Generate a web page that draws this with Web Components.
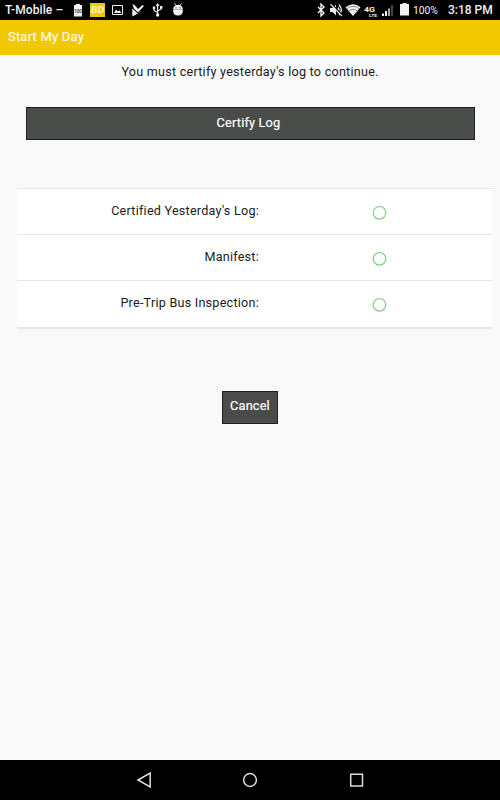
<!DOCTYPE html>
<html lang="en">
<head>
<meta charset="utf-8">
<title>Start My Day</title>
<style>
html, body {
  margin: 0;
  height: 100%;
  background: #f9f9f9;
}
</style>
</head>
<body>
<day-app></day-app>

<template id="status-bar">
<style>
:host {
  display: flex;
  height: 20px;
  align-items: center;
  justify-content: space-between;
  padding: 0 7px 0 5px;
  background: #000;
  color: #f2f2f2;
  font-size: 12px;
  line-height: 20px;
  white-space: nowrap;
}
.side {
  display: flex;
  height: 20px;
}
svg {
  display: block;
  flex: none;
  fill: #f2f2f2;
}
.carrier {
  width: 67px;
  font-weight: 500;
  letter-spacing: 0.1px;
}
.pct {
  width: 35px;
  font-size: 10.3px;
  line-height: 21px;
}
.time {
  width: 45px;
  font-size: 12px;
  font-weight: 500;
}
.tiny {
  font: bold 5px Roboto, sans-serif;
  fill: #555;
}
.logo {
  font: italic bold 9.5px Roboto, sans-serif;
  fill: #fff6c8;
}
.net {
  font: bold 8px Roboto, sans-serif;
}
.lte {
  font: bold 3.5px Roboto, sans-serif;
}
.line {
  fill: none;
  stroke: #f2f2f2;
}
</style>
<div class="side">
  <span class="carrier">T-Mobile –</span>
  <svg width="18" height="20"><path d="M2 5h2V4h4v1h2v11.500H2z"/><text class="tiny" x="1.900" y="12.500" textLength="8">100</text></svg>
  <svg width="20" height="20"><path fill="#f2c900" d="M0 3h15v14H0z"/><text class="logo" x="1" y="13.300" textLength="13" lengthAdjust="spacingAndGlyphs">BD</text></svg>
  <svg width="21" height="20"><path class="line" d="M2.500 5.500h10v9h-10z"/><path d="M4 13l2-3.500 2 2 1.500-1.200 1.800 2.700z"/></svg>
  <svg width="21" height="20"><path d="M1.300 4L4 5.500 7 9l4.500-4 1.300 1.300L7 12.500 3 8.800zM1.300 8.500L7 13.700 9 11.800l1.500-.3L1.300 16.500z"/></svg>
  <svg width="20" height="20"><path class="line" stroke-width="1.200" d="M5.600 5v9M5.600 12.500L2 10.500V8M5.600 11l3.600-2V7"/><path d="M5.600 3l1.900 3H3.700zM.8 6.500h2.400v2.400H.8zM8 6h2.400v2.400H8z"/><circle cx="5.600" cy="15" r="1.700"/></svg>
  <svg width="14" height="20"><path d="M1.200 9a4.800 4.300 0 0 1 9.600 0v.700H1.200zM1.200 10.100h9.600v1q0 4.400-4.800 4.400t-4.800-4.400z"/><path class="line" d="M2.500 3.500L4 5.500M9.500 3.500L8 5.500"/><circle cx="4" cy="7.800" r=".6" fill="#000"/><circle cx="8" cy="7.800" r=".6" fill="#000"/></svg>
</div>
<div class="side">
  <svg width="13" height="20"><path class="line" stroke-width="1.400" d="M1 7l6 6-3 2.800V4.200L7 7l-6 6"/></svg>
  <svg width="16" height="20"><path d="M0 8h2.500L6 4.500v11L2.500 12H0z"/><path class="line" stroke-width="1.300" d="M8 7.500q1.800 2.500 0 5M9 4.700q4.500 5 0 10.300"/><path stroke="#000" stroke-width="1.200" d="M1.500 3.500l11 12"/><path class="line" stroke-width="1.200" d="M0.500 4.200l11.500 11.900"/></svg>
  <svg width="18" height="20"><path d="M-.5 7.300q7.500-6 15 0l-1.200 1.500L7 16 .7 8.800z"/><path fill="none" stroke="#555" stroke-width=".7" d="M.7 8.800q6.300-5 12.600 0M2.700 11q4.300-3.500 8.600 0"/></svg>
  <svg width="18" height="20"><text class="net" x="0" y="12" textLength="11" lengthAdjust="spacingAndGlyphs">4G</text><text class="lte" x="5" y="17" textLength="8" lengthAdjust="spacingAndGlyphs">LTE</text></svg>
  <svg width="18" height="20"><path d="M0 13.500h2V16H0zM3 11h2v5H3z"/><path fill="#aaa" d="M6 8.500h2V16H6z"/><path fill="#444" d="M9 5h2v11H9z"/></svg>
  <svg width="13" height="20"><path d="M0 4h2.500V3h4v1H9v11.500H0z"/></svg>
  <span class="pct">100%</span>
  <span class="time">3:18 PM</span>
</div>
</template>

<template id="title-bar">
<style>
:host {
  display: block;
  height: 35px;
  padding-left: 8px;
  background: #f2c900;
  color: #fffbe6;
  font-size: 13px;
  line-height: 33px;
  letter-spacing: 0.2px;
  -webkit-text-stroke: 0.2px;
}
</style>
<slot></slot>
</template>

<template id="dark-button">
<style>
:host {
  display: block;
  box-sizing: border-box;
  height: 33px;
  border: 1px solid #1c2120;
  background: #4a4c4a;
  color: #fff;
  font-size: 12.7px;
  line-height: 30px;
  letter-spacing: 0.2px;
  text-align: center;
  -webkit-text-stroke: 0.2px;
}
</style>
<slot></slot>
</template>

<template id="check-list">
<style>
:host {
  display: block;
  border-top: 1px solid #e3e3e3;
  border-bottom: 1px solid #e8e8e8;
  background: #fff;
}
</style>
<slot></slot>
</template>

<template id="check-item">
<style>
:host {
  display: grid;
  grid-template-columns: 242px 1fr;
  box-sizing: border-box;
  height: 46px;
  border-bottom: 1px solid #e5e5e5;
}
:host(:last-child) {
  height: 47px;
}
.label {
  text-align: right;
  line-height: 44px;
}
svg {
  display: block;
  margin: 16px 0 0 113px;
  fill: none;
  stroke: #7dce7d;
  stroke-width: 1.2;
}
</style>
<span class="label"><slot></slot></span>
<svg width="16" height="16"><circle cx="7.500" cy="7.800" r="6.300"/></svg>
</template>

<template id="nav-bar">
<style>
:host {
  display: flex;
  height: 40px;
  align-items: center;
  justify-content: center;
  gap: 86px;
  background: #000;
}
svg {
  display: block;
  fill: none;
  stroke: #dcdcdc;
  stroke-width: 1.5;
}
</style>
<svg width="20" height="20"><path d="M4 10L16.200 3v14z"/></svg>
<svg width="20" height="20"><circle cx="10" cy="10" r="6.400"/></svg>
<svg width="20" height="20"><path d="M4.700 4.200h11.800v11.800H4.700z"/></svg>
</template>

<template id="day-app">
<style>
:host {
  display: flex;
  flex-direction: column;
  height: 800px;
  width: 500px;
  background: #f9f9f9;
  color: #1c1c1c;
  font-family: Roboto, sans-serif;
  font-size: 12.6px;
  letter-spacing: 0.24px;
}
status-bar, nav-bar {
  letter-spacing: 0;
}
main {
  flex: 1;
}
p {
  margin: 0;
  padding-top: 7px;
  line-height: 20px;
  text-align: center;
}
.certify {
  margin: 25px 25px 0 26px;
  padding-right: 4px;
}
check-list {
  margin: 48px 8px 0 17px;
}
.cancel {
  width: 56px;
  margin: 62px auto 0;
  line-height: 28px;
}
</style>
<status-bar></status-bar>
<title-bar>Start My Day</title-bar>
<main>
  <p>You must certify yesterday's log to continue.</p>
  <dark-button class="certify">Certify Log</dark-button>
  <check-list>
    <check-item>Certified Yesterday's Log:</check-item>
    <check-item>Manifest:</check-item>
    <check-item>Pre-Trip Bus Inspection:</check-item>
  </check-list>
  <dark-button class="cancel">Cancel</dark-button>
</main>
<nav-bar></nav-bar>
</template>

<script>
// each template's id is the tag name of its element
for ( const template of document.querySelectorAll("template") ) {
  customElements.define(template.id, class extends HTMLElement {
    constructor() {
      super();
      this.attachShadow({mode: "open"});
      this.shadowRoot.appendChild(template.content.cloneNode(true));
    }
  });
}
</script>
</body>
</html>
